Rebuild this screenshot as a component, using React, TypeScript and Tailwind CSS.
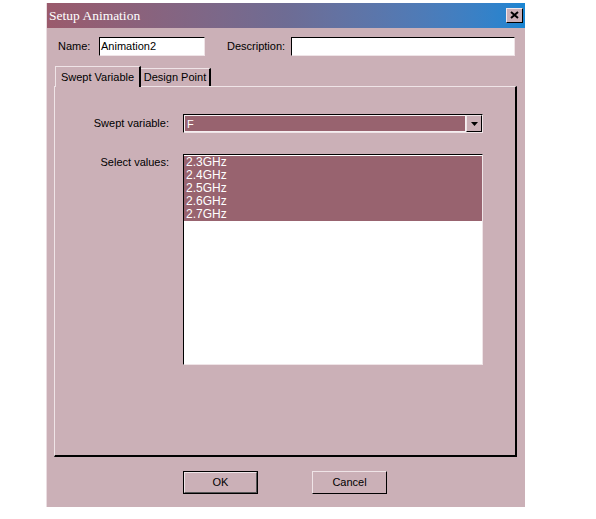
export default function App() {
  const values = ["2.3GHz", "2.4GHz", "2.5GHz", "2.6GHz", "2.7GHz"];
  const font = { fontFamily: '"Liberation Sans", Arial, sans-serif' };

  return (
    <div className="w-[596px] h-[519px] bg-white pt-[3px] pl-[46px]" style={font}>
      <div className="w-[479px] h-[504px] bg-[#cbb0b7] border-l border-l-[#eadde1] flex flex-col">
        {/* title bar */}
        <div className="h-[25px] flex items-center justify-between pl-[2px] pr-[2px] bg-gradient-to-r from-[#9a5a6c] via-[#6e6c94] to-[#1a85d2]">
          <span className="text-white text-[13.5px] leading-none" style={{ fontFamily: '"Liberation Serif", "Times New Roman", serif' }}>
            Setup Animation
          </span>
          <button className="w-[17px] h-[15px] bg-[#cbb0b7] border border-t-[#f2e8eb] border-l-[#f2e8eb] border-b-black border-r-black flex items-center justify-center mb-[1px]">
            <svg width="9" height="8" viewBox="0 0 9 8">
              <path d="M1 1 L8 7 M8 1 L1 7" stroke="black" strokeWidth="2" />
            </svg>
          </button>
        </div>

        {/* name / description */}
        <div className="flex items-center mt-[9px] pl-[11px] text-[11px] text-black">
          <span className="w-[41px]">Name:</span>
          <div className="w-[106px] h-[19px] bg-white border border-t-black border-l-black border-b-[#efe4e7] border-r-[#efe4e7] px-[1px] leading-[17px]">
            Animation2
          </div>
          <span className="ml-[22px] w-[64px]">Description:</span>
          <div className="w-[224px] h-[19px] bg-white border border-t-black border-l-black border-b-[#efe4e7] border-r-[#efe4e7]" />
        </div>

        {/* tabs */}
        <div className="flex items-end mt-[10px] pl-[8px] h-[20px] text-[11px] text-black relative z-10">
          <div className="h-[21px] w-[86px] flex items-center justify-center border-t border-l border-t-[#efe4e7] border-l-[#efe4e7] border-r-2 border-r-black bg-[#cbb0b7] -mb-[1px]">
            Swept Variable
          </div>
          <div className="h-[18px] w-[70px] flex items-center justify-center border-t border-t-[#efe4e7] border-r-2 border-r-black">
            Design Point
          </div>
        </div>

        {/* panel */}
        <div className="ml-[7px] w-[463px] h-[371px] border-t border-l border-t-[#efe4e7] border-l-[#efe4e7] border-r-2 border-b-2 border-r-black border-b-black text-[11px] text-black">
          <div className="flex items-center mt-[27px]">
            <span className="w-[128px] text-right pr-[14px]">Swept variable:</span>
            <div className="w-[300px] h-[19px] flex border border-t-black border-l-black border-b-[#efe4e7] border-r-[#efe4e7]">
              <div className="flex-1 bg-[#98636f] text-white px-[2px] leading-[17px] border border-[#f5eef0]">F</div>
              <div className="w-[16px] h-[17px] bg-[#cbb0b7] border border-t-[#efe4e7] border-l-[#efe4e7] border-b-black border-r-black flex items-center justify-center">
                <svg width="7" height="4" viewBox="0 0 7 4">
                  <path d="M0 0 H7 L3.5 4 Z" fill="black" />
                </svg>
              </div>
            </div>
          </div>

          <div className="flex mt-[21px]">
            <span className="w-[128px] text-right pr-[14px]">Select values:</span>
            <div className="w-[300px] h-[211px] bg-white border border-t-black border-l-black border-b-[#efe4e7] border-r-[#efe4e7] pt-[1px]">
              {values.map((v) => (
                <div key={v} className="h-[13px] leading-[13px] bg-[#98636f] text-white px-[2px] text-[12px]">
                  {v}
                </div>
              ))}
            </div>
          </div>
        </div>

        {/* buttons */}
        <div className="flex mt-[14px] pl-[136px] gap-[54px] text-[11px] text-black">
          <button className="w-[75px] h-[23px] border border-black bg-[#cbb0b7]">
            <div className="w-full h-full border border-t-[#efe4e7] border-l-[#efe4e7] border-b-[#555] border-r-[#555] flex items-center justify-center">
              OK
            </div>
          </button>
          <button className="w-[75px] h-[23px] bg-[#cbb0b7] border border-t-[#efe4e7] border-l-[#efe4e7] border-b-black border-r-black flex items-center justify-center">
            Cancel
          </button>
        </div>
      </div>
    </div>
  );
}
